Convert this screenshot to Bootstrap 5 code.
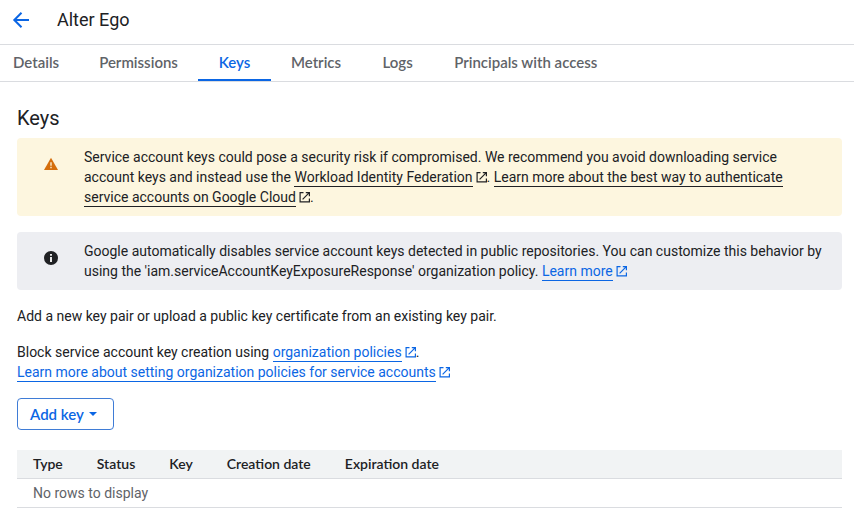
<!DOCTYPE html>
<html lang="en">
<head>
<meta charset="utf-8">
<meta name="viewport" content="width=device-width, initial-scale=1">
<title>Alter Ego – Keys</title>
<link href="https://cdn.jsdelivr.net/npm/bootstrap@5.3.0/dist/css/bootstrap.min.css" rel="stylesheet">
<style>
body { font: 14px/20px Roboto, sans-serif; color: #202124; background: #fff; }
.brand-font { font-family: "Google Sans", Lato, sans-serif; }
.page-head { height: 45px; padding: 0 12px 4px; border-bottom: 1px solid #dadce0; gap: 26px; }
.back-btn { width: 19px; height: 20px; color: #0b66e4; }
.page-title { font-size: 18px; line-height: 24px; font-weight: 400; }
.section-tabs { border-bottom: 1px solid #dadce0; }
.section-tabs .nav-link { height: 36px; min-width: 73px; padding: 7px 20px; font-weight: 600; font-size: 15px; line-height: 20px; color: #5f6368; text-align: center; border-bottom: 2px solid transparent; }
.section-tabs .nav-item:first-child .nav-link { padding-left: 13px; }
.section-tabs .nav-link.active { color: #0b66e4; border-bottom-color: #0b66e4; }
.page-body { padding: 24px 12px 16px 17px; }
.section-title { font-size: 20px; line-height: 24px; font-weight: 400; margin-bottom: 8px; }
.notice { border: 0; border-radius: 4px; padding: 9px 17px 9px 27px; gap: 26px; color: inherit; }
.notice-warn { background: #fdf6df; margin-bottom: 16px; }
.notice-info { background: #edeef2; margin-bottom: 16px; }
.notice svg.status-icon { margin-top: 10px; }
.txt-link { color: #0b66e4; text-decoration: none; border-bottom: 1px solid; padding-bottom: 1px; }
.notice-warn .txt-link { color: #202124; }
.ext { width: 11px; height: 11px; margin-left: 3px; vertical-align: -1px; color: #0b66e4; }
.notice-warn .ext { color: #202124; }
.add-btn { height: 32px; padding: 0 16px 0 12px; border: 1px solid #3f7cd6; border-radius: 4px; color: #0b66e4; font-weight: 600; font-size: 15px; line-height: 20px; gap: 5px; }
.keys-table { font-size: 14px; line-height: 20px; color: #202124; margin-top: 20px; }
.keys-table th, .keys-table td { padding: 4px 17px; border-bottom: 1px solid #dadce0; white-space: nowrap; }
.keys-table th:first-child, .keys-table td { padding-left: 16px; }
.keys-table th { background: #f1f3f4; font-weight: 600; }
.keys-table td { color: #5f6368; }
</style>
<script src="https://cdn.jsdelivr.net/npm/bootstrap@5.3.0/dist/js/bootstrap.bundle.min.js"></script>
</head>
<body>
<svg class="d-none" aria-hidden="true">
  <symbol id="ext" viewBox="0 0 11 11"><path d="M4.5.6H1.1v9.3h9.3V6.6M6.8.6h3.6v3.6M10.3.7 3.6 7.4" fill="none" stroke="currentColor" stroke-width="1.2"/></symbol>
</svg>
<header class="page-head d-flex align-items-center">
  <button type="button" class="back-btn btn p-0 border-0 d-flex align-items-center" aria-label="Back">
    <svg width="18" height="18" viewBox="0 0 18 18" fill="none" stroke="currentColor" stroke-width="2"><path d="M17 9H2.5M9.5 1.8 2.3 9l7.2 7.2"/></svg>
  </button>
  <h1 class="page-title mb-0">Alter Ego</h1>
</header>
<nav aria-label="Sections">
  <ul class="section-tabs brand-font nav flex-nowrap">
    <li class="nav-item"><a class="nav-link" href="#">Details</a></li>
    <li class="nav-item"><a class="nav-link" href="#">Permissions</a></li>
    <li class="nav-item"><a class="nav-link active" aria-current="page" href="#">Keys</a></li>
    <li class="nav-item"><a class="nav-link" href="#">Metrics</a></li>
    <li class="nav-item"><a class="nav-link" href="#">Logs</a></li>
    <li class="nav-item"><a class="nav-link text-nowrap" href="#">Principals with access</a></li>
  </ul>
</nav>
<main class="page-body">
  <h2 class="section-title">Keys</h2>
  <div class="alert notice notice-warn d-flex align-items-start" role="note">
    <svg class="status-icon flex-shrink-0" width="14" height="14" viewBox="0 0 14 14" aria-hidden="true"><path d="M7 .8 14 13H0z" fill="#d56e0c"/><path d="M7 5.2v3.6M7 9.8v1.4" stroke="#fdf6df" stroke-width="1.3"/></svg>
    <div>Service account keys could pose a security risk if compromised. We recommend you avoid downloading service account keys and instead use the <a class="txt-link" href="#">Workload Identity Federation</a><svg class="ext"><use href="#ext"/></svg>. <a class="txt-link" href="#">Learn more about the best way to authenticate service accounts on Google Cloud</a><svg class="ext"><use href="#ext"/></svg>.</div>
  </div>
  <div class="alert notice notice-info d-flex align-items-start" role="note">
    <svg class="status-icon flex-shrink-0" width="14" height="14" viewBox="0 0 14 14" aria-hidden="true"><circle cx="7" cy="7" r="7" fill="#202124"/><path d="M7 3v1.8M7 6v5" stroke="#fff" stroke-width="1.8"/></svg>
    <div>Google automatically disables service account keys detected in public repositories. You can customize this behavior by using the 'iam.serviceAccountKeyExposureResponse' organization policy. <a class="txt-link" href="#">Learn more</a><svg class="ext"><use href="#ext"/></svg></div>
  </div>
  <p class="mb-3">Add a new key pair or upload a public key certificate from an existing key pair.</p>
  <p class="mb-3">Block service account key creation using <a class="txt-link" href="#">organization policies</a><svg class="ext"><use href="#ext"/></svg>.<br><a class="txt-link" href="#">Learn more about setting organization policies for service accounts</a><svg class="ext"><use href="#ext"/></svg></p>
  <button type="button" class="add-btn btn brand-font d-inline-flex align-items-center" aria-haspopup="true">Add key
    <svg width="8" height="4" viewBox="0 0 8 4" aria-hidden="true"><path d="M0 0h8L4 4z" fill="currentColor"/></svg>
  </button>
  <table class="keys-table w-100">
    <thead class="brand-font"><tr><th scope="col">Type</th><th scope="col">Status</th><th scope="col">Key</th><th scope="col">Creation date</th><th scope="col" class="w-100">Expiration date</th></tr></thead>
    <tbody><tr><td colspan="5">No rows to display</td></tr></tbody>
  </table>
</main>
</body>
</html>
